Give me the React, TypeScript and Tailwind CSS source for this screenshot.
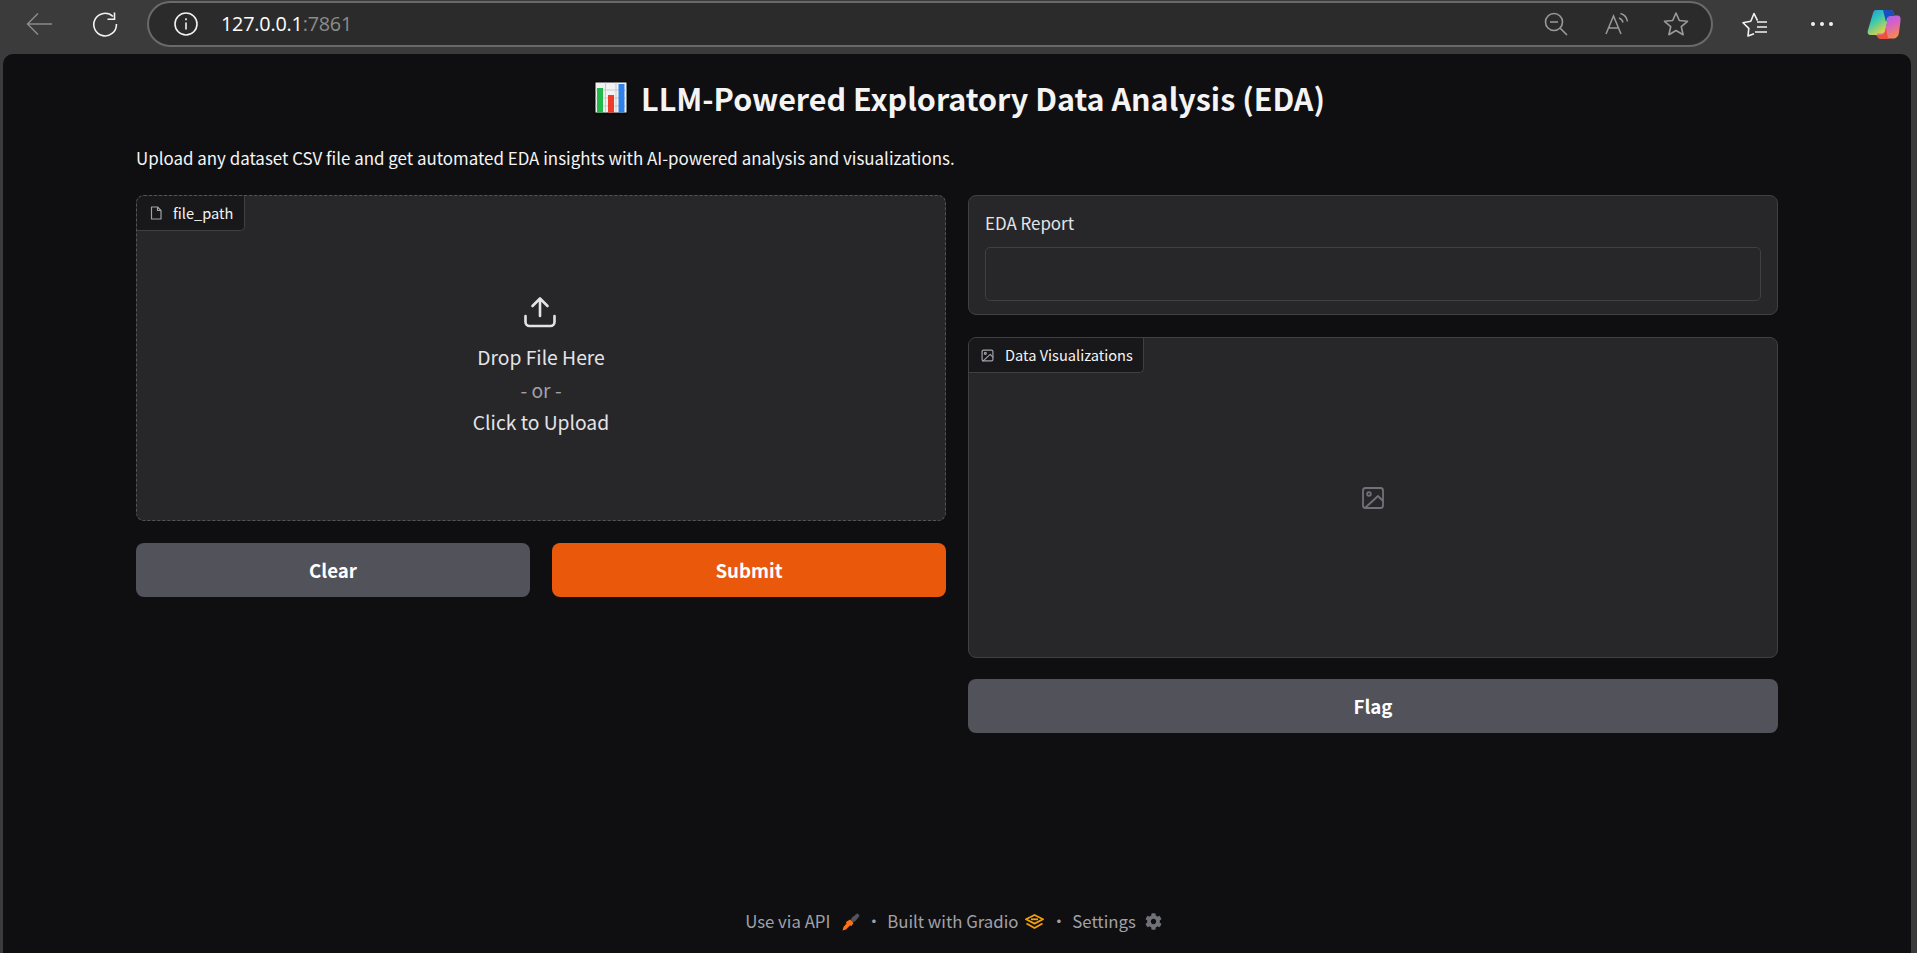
import React from "react";
import { FaCog } from "react-icons/fa";

const font = { fontFamily: '"Noto Sans CJK SC", "Noto Sans", sans-serif' };

function BrowserBar() {
  return (
    <div className="h-[54px] shrink-0 flex items-start text-white">
      <div className="w-[147px] h-[48px] flex items-center shrink-0">
        <svg className="ml-[26px]" width="26" height="24" viewBox="0 0 26 24" fill="none" stroke="#8a8a8a" strokeWidth="1.5">
          <path d="M26 12H1.500M12 1.500 1.500 12 12 22.500" />
        </svg>
        <svg className="ml-[40px]" width="26" height="26" viewBox="0 0 26 26" fill="none" stroke="#f2f2f2" strokeWidth="1.6">
          <path d="M21 5.500A11.300 11.300 0 1 0 24.400 13" />
          <path d="M15.500 5.800h7V-1" transform="translate(0 2.500)" />
        </svg>
      </div>
      <div className="ml-0 mt-[1px] w-[1566px] h-[46px] rounded-full border-2 border-[#6a6a6a] bg-[#2b2b2b] flex items-center shrink-0">
        <svg className="ml-[25px]" width="24" height="24" viewBox="0 0 24 24" fill="none" stroke="#f2f2f2" strokeWidth="1.6">
          <circle cx="12" cy="12" r="11" />
          <path d="M12 10.500v7M12 6.200v2" />
        </svg>
        <span className="ml-[23px] text-[19.800px] leading-none tracking-[-0.2px]" style={{ fontFamily: '"Open Sans", sans-serif' }}>
          <span className="text-white">127.0.0.1</span>
          <span className="text-[#8b8b8b]">:7861</span>
        </span>
        <div className="ml-auto flex items-center mr-[22px]">
          <svg width="24" height="24" viewBox="0 0 24 24" fill="none" stroke="#9a9a9a" strokeWidth="1.6">
            <circle cx="10" cy="10" r="8.500" />
            <path d="M6 10h8M16 16l7 7" />
          </svg>
          <svg className="ml-[37px]" width="24" height="24" viewBox="0 0 24 24" fill="none" stroke="#9a9a9a" strokeWidth="1.5">
            <path d="M1 22 8.500 4 16 22M3.700 16h10" />
            <path d="M14 6a6 6 0 0 1 4 4.500M15.500 1.500a10 10 0 0 1 7 8" />
          </svg>
          <svg className="ml-[34px]" width="26" height="26" viewBox="0 0 26 26" fill="none" stroke="#9a9a9a" strokeWidth="1.6">
            <path d="m13 2 3.300 7.500 8.200.8-6.200 5.400 1.800 8L13 19.500l-7.100 4.200 1.800-8-6.200-5.400 8.200-.8z" strokeLinejoin="round" />
          </svg>
        </div>
      </div>
      <div className="flex items-center h-[48px] shrink-0">
        <svg className="ml-[29px]" width="26" height="26" viewBox="0 0 26 26" fill="none" stroke="#f2f2f2" strokeWidth="1.6">
          <path d="M12 22.800 6 25l.8-7.600L1 11.700l7.800-1.500L12 2.500l3.500 7.200" strokeLinejoin="round" />
          <path d="M15 11h10M15 16h10M13 21h12" />
        </svg>
        <div className="ml-[43px] flex gap-[5px]">
          <div className="w-[4px] h-[4px] rounded-full bg-[#f2f2f2]" />
          <div className="w-[4px] h-[4px] rounded-full bg-[#f2f2f2]" />
          <div className="w-[4px] h-[4px] rounded-full bg-[#f2f2f2]" />
        </div>
        <svg className="ml-[34px]" width="34" height="32" viewBox="0 0 34 32">
          <defs>
            <linearGradient id="cpa" x1="0" y1="0" x2="0.6" y2="1">
              <stop offset="0" stopColor="#1f8ef0" />
              <stop offset="0.45" stopColor="#36c9b0" />
              <stop offset="1" stopColor="#f2d23a" />
            </linearGradient>
            <linearGradient id="cpb" x1="0.3" y1="0" x2="0.7" y2="1">
              <stop offset="0" stopColor="#8a6cf0" />
              <stop offset="0.5" stopColor="#d45fd0" />
              <stop offset="1" stopColor="#f88a4a" />
            </linearGradient>
          </defs>
          <path d="M9 2h14l-5 22c-.5 2-2 3-4 3H4c-3 0-4-2-3-5L6 5c.5-2 1.500-3 3-3z" fill="url(#cpa)" />
          <path d="M23 2c2 0 3 1 3.500 3l1 2.500h2.500c3 0 4 2 3.500 5l-1.500 12c-.5 4-3 6-6 6h-12c-2 0-3-1-3.500-3l-.5-2h4c2 0 3.500-1 4-3z" fill="url(#cpb)" />
          <path d="M16 2h7c1.500 0 3 1 3.500 3l1 3h-4c-2 0-3 1-3.500 3l-1 3z" fill="#1a4fc0" />
          <path d="M9 27h5c2 0 3.500-1 4-3l1-4 1.500 8c.3 1.500 1 2.500 2 3H14c-2 0-3-1-3.500-2z" fill="#f0503a" />
        </svg>
      </div>
    </div>
  );
}

function TabLabel({ icon, text, width }: { icon: React.ReactNode; text: string; width: string }) {
  return (
    <div className={`${width} h-[35px] flex items-center bg-[#18181b] border-r border-b border-[#3f3f46] rounded-br-[5px] text-[14.600px] text-[#f4f4f5] shrink-0`}>
      {icon}
      <span className="ml-[11px] leading-none">{text}</span>
    </div>
  );
}

function Button({ children, className }: { children: React.ReactNode; className: string }) {
  return (
    <button className={`h-[54px] rounded-[8px] text-white text-[18.700px] font-semibold flex items-center justify-center ${className}`}>
      {children}
    </button>
  );
}

function Footer() {
  return (
    <div className="mt-auto h-[62px] pb-[1px] pr-[7px] flex items-center justify-center text-[16.800px] text-[#a1a1aa] shrink-0">
      <span>Use via API</span>
      <svg className="ml-[12px]" width="18" height="18" viewBox="0 0 18 18">
        <path d="M10 4.500 15 .500c1 0 2.500 1.500 2.500 2.500l-4 5-3 1.500-2-2z" fill="#52525b" />
        <path d="M8 6.500l3.500 3.500-2 3-1.500-.5L4 16.500l-3.500 1 1-3.500 3-3.500-.5-1.500z" fill="#f97316" />
      </svg>
      <span className="ml-[5px]">·</span>
      <span className="ml-[5px]">Built with Gradio</span>
      <svg className="ml-[7px]" width="19" height="16" viewBox="0 0 19 16" fill="none" stroke="#f59e0b" strokeWidth="1.800" strokeLinejoin="round">
        <path d="M9.500 1 18 5.300 9.500 9.600 1 5.300z" />
        <path d="M1.500 9.500 9.500 14l8-4.500" />
        <path d="M6 5.300h7" />
      </svg>
      <span className="ml-[6px]">·</span>
      <span className="ml-[5px]">Settings</span>
      <FaCog className="ml-[9px] text-[#71717a]" size={17} />
    </div>
  );
}

export default function App() {
  return (
    <div className="h-[953px] w-[1917px] overflow-hidden bg-[#3b3b3b] flex flex-col" style={font}>
      <BrowserBar />
      <div className="flex-1 ml-[3px] mr-[6px] rounded-t-[10px] bg-[#0f0f11] flex flex-col min-h-0">
        <div className="px-[133px] pt-[24px] flex flex-col text-white">
          <h1 className="h-[40px] pl-[5px] flex items-center justify-center text-[30.500px] font-semibold leading-none text-[#f4f4f5]">
            <svg className="mr-[13px]" width="34" height="34" viewBox="0 0 34 34">
              <rect x="0" y="0" width="34" height="34" fill="#0b0b0c" />
              <rect x="1.500" y="1.500" width="31" height="30" fill="#f2f2f2" />
              <path d="M11.500 1.500v30M22 1.500v30M1.500 9h31M1.500 17h31M1.500 25h31" stroke="#c9c9c9" strokeWidth="1" />
              <rect x="3" y="7" width="6" height="24.500" fill="#22b84a" />
              <rect x="14" y="14" width="6" height="17.500" fill="#ee3b2b" />
              <rect x="24.500" y="3" width="6" height="28.500" fill="#2f80e8" />
            </svg>
            LLM-Powered Exploratory Data Analysis (EDA)
          </h1>
          <p className="mt-[28px] text-[16.920px] leading-[24px] text-[#f4f4f5]">
            Upload any dataset CSV file and get automated EDA insights with AI-powered analysis and visualizations.
          </p>
          <div className="mt-[25px] flex gap-[22px] items-start">
            <div className="flex-1 flex flex-col gap-[22px] min-w-0">
              <div className="h-[326px] rounded-[8px] border border-dashed border-[#52525b] bg-[#27272a] flex flex-col overflow-hidden">
                <TabLabel
                  width="w-[108px]"
                  text="file_path"
                  icon={
                    <svg className="ml-[13px]" width="12" height="14" viewBox="0 0 12 14" fill="none" stroke="#a1a1aa" strokeWidth="1.200">
                      <path d="M1.500 1h6l3.500 3.500V13H1.500z" strokeLinejoin="round" />
                      <path d="M7.500 1v3.500H11" />
                    </svg>
                  }
                />
                <div className="flex-1 flex flex-col items-center pt-[65px]">
                  <svg className="-ml-[2px]" width="32" height="32" viewBox="0 0 32 32" fill="none" stroke="#e4e4e7" strokeWidth="2.600" strokeLinecap="round" strokeLinejoin="round">
                    <path d="M16 20V3M8.500 10 16 2.500 23.500 10" />
                    <path d="M1.500 20v6a4 4 0 0 0 4 4h21a4 4 0 0 0 4-4v-6" />
                  </svg>
                  <div className="mt-[13px] text-[19.300px] leading-[32px] text-[#e4e4e7]">Drop File Here</div>
                  <div className="text-[19.300px] leading-[35px] text-[#a1a1aa]">- or -</div>
                  <div className="text-[19.300px] leading-[28px] text-[#e4e4e7]">Click to Upload</div>
                </div>
              </div>
              <div className="flex gap-[22px]">
                <Button className="flex-1 bg-[#52525b]">Clear</Button>
                <Button className="flex-1 bg-[#ea580c]">Submit</Button>
              </div>
            </div>
            <div className="flex-1 flex flex-col gap-[22px] min-w-0">
              <div className="h-[120px] rounded-[8px] border border-[#3f3f46] bg-[#27272a] px-[16px] pt-[15px] flex flex-col">
                <div className="text-[16.920px] leading-[24px] text-[#e4e4e7]">EDA Report</div>
                <div className="mt-[12px] h-[54px] rounded-[5px] border border-[#3f3f46] bg-[#27272a]" />
              </div>
              <div className="h-[321px] rounded-[8px] border border-[#3f3f46] bg-[#27272a] flex flex-col overflow-hidden">
                <TabLabel
                  width="w-[175px]"
                  text="Data Visualizations"
                  icon={
                    <svg className="ml-[12px]" width="13" height="13" viewBox="0 0 24 24" fill="none" stroke="#a1a1aa" strokeWidth="2.200" strokeLinecap="round" strokeLinejoin="round">
                      <rect x="2" y="2" width="20" height="20" rx="2.500" />
                      <circle cx="8" cy="8" r="1.800" />
                      <path d="M22 15l-5-5L4 22" />
                    </svg>
                  }
                />
                <div className="flex-1 flex items-center justify-center pb-[34px]">
                  <svg className="-ml-[1px]" width="24" height="24" viewBox="0 0 24 24" fill="none" stroke="#71717a" strokeWidth="1.800" strokeLinecap="round" strokeLinejoin="round">
                    <rect x="2" y="2" width="20" height="20" rx="2.500" />
                    <circle cx="8" cy="8" r="1.800" />
                    <path d="M22 15l-5-5L4 22" />
                  </svg>
                </div>
              </div>
              <Button className="w-full -mt-[1px] bg-[#52525b]">Flag</Button>
            </div>
          </div>
        </div>
        <Footer />
      </div>
    </div>
  );
}
